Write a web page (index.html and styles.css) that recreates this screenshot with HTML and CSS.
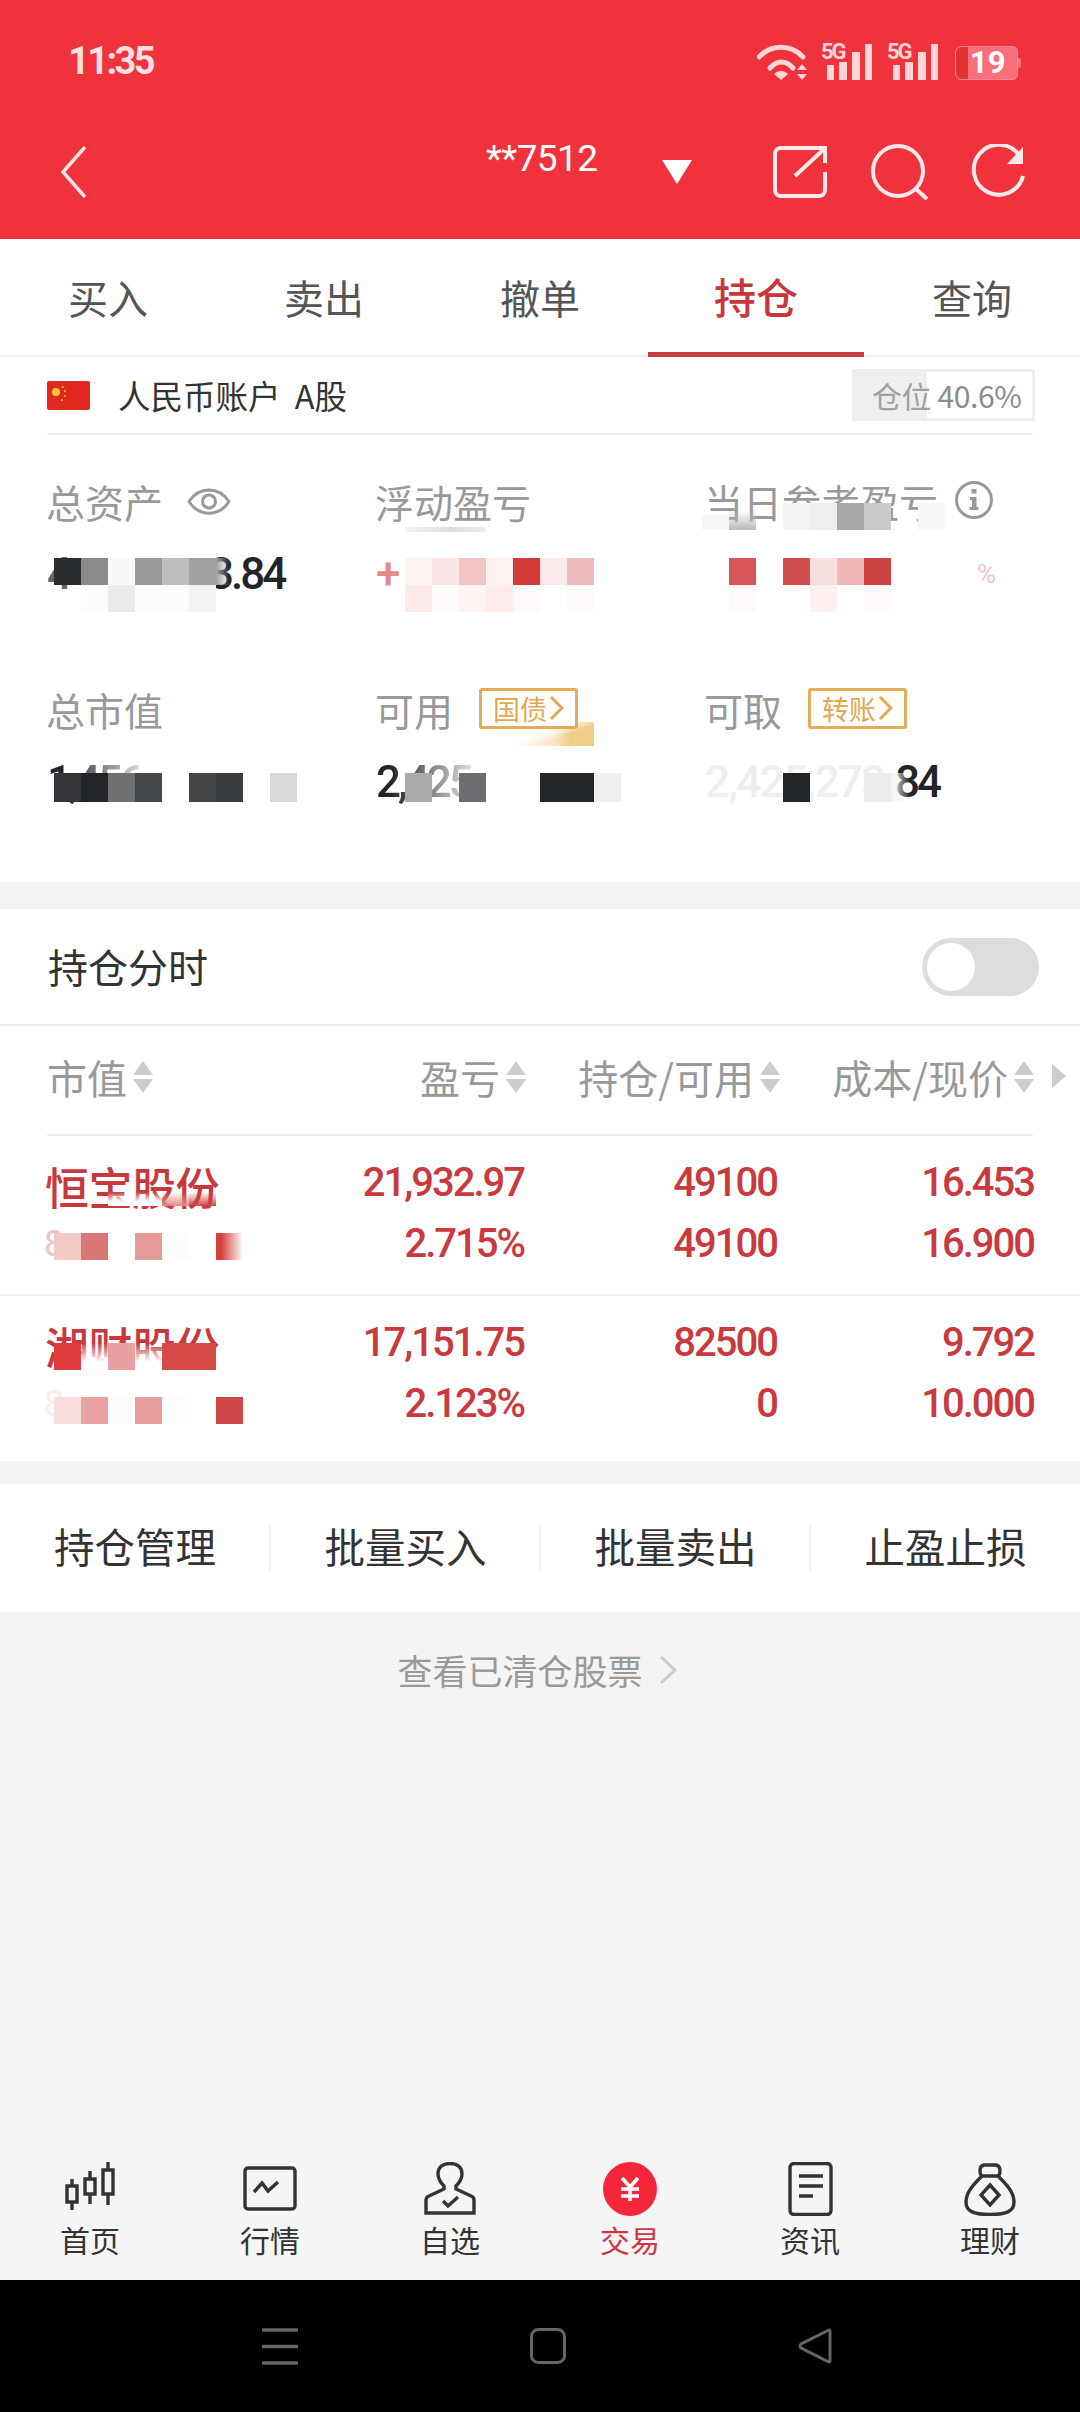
FILE: index.html
```html
<!DOCTYPE html>
<html lang="zh-CN">
<head>
<meta charset="utf-8">
<title>持仓</title>
<link rel="stylesheet" href="styles.css">
</head>
<body>
<div class="page">
  <header class="appbar">
    <div class="status">
      <span class="time">11:35</span>
      <div class="status-icons">
        <svg class="ic-wifi" viewBox="0 0 50 37"><path class="wifi-arc" d="M2 14C14 1 34 1 46 14"/><path class="wifi-arc" d="M13 25C20 17 29 17 36 25"/><path class="wifi-fill" d="M24 37L17 31C21 27 27 27 31 31Z"/><path class="wifi-fill" d="M45 21L50 27H40ZM45 37L40 31H50Z"/></svg>
        <div class="signal"><span class="five-g">5G</span><svg class="ic-signal" viewBox="0 0 52 37"><path class="bars" d="M6 22H13V37H6ZM18 19H26V37H18ZM31 9H39V37H31ZM44 1H51V37H44Z"/></svg></div>
        <div class="signal"><span class="five-g">5G</span><svg class="ic-signal" viewBox="0 0 52 37"><path class="bars" d="M6 22H13V37H6ZM18 19H26V37H18ZM31 9H39V37H31ZM44 1H51V37H44Z"/></svg></div>
        <div class="battery"><span class="batt-low"></span><span class="batt-num">19</span></div>
      </div>
    </div>
    <div class="navrow">
      <svg class="ic-back" viewBox="0 0 27 52"><path d="M25 1L3 26L25 51"/></svg>
      <span class="account">**7512</span>
      <svg class="ic-tri" viewBox="0 0 30 24"><path d="M0 0H30L15 24Z"/></svg>
      <svg class="ic-share" viewBox="0 0 54 52"><path d="M52 17V2H8A6 6 0 0 0 2 8V44A6 6 0 0 0 8 50H46A6 6 0 0 0 52 44V26M22 30L51 3"/></svg>
      <svg class="ic-search" viewBox="0 0 58 56"><circle cx="27" cy="27" r="25"/><path d="M45 45L56 55"/></svg>
      <svg class="ic-refresh" viewBox="0 0 58 56"><path d="M50 11A25 25 0 1 0 54 32"/><path class="fillw" d="M54 3V20H38Z"/></svg>
    </div>
  </header>

  <nav class="tabs">
    <span class="tab">买入</span>
    <span class="tab">卖出</span>
    <span class="tab">撤单</span>
    <span class="tab tab-on">持仓</span>
    <span class="tab">查询</span>
  </nav>

  <section class="acct">
    <svg class="flag" viewBox="0 0 43 29"><rect width="43" height="29" rx="2" fill="#E0281E"/><circle cx="9" cy="11" r="4" fill="#F6C93C"/><circle cx="16" cy="6" r="1" fill="#F6C93C"/><circle cx="18" cy="10" r="1" fill="#F6C93C"/><circle cx="18" cy="15" r="1" fill="#F6C93C"/><circle cx="15" cy="19" r="1" fill="#F6C93C"/></svg>
    <span class="acct-name">人民币账户 A股</span>
    <span class="ratio"><span class="ratio-l">仓位</span> 40.6%</span>
  </section>

  <section class="stats">
    <div class="stat">
      <div class="label">总资产<svg class="ic-eye" viewBox="0 0 44 29"><path d="M2 14.5C12 -1 32 -1 42 14.5C32 30 12 30 2 14.5Z"/><circle cx="22" cy="14.5" r="6.5"/></svg></div>
      <div class="val"><span class="frag">4</span><span class="sp-total"></span>3.84</div>
    </div>
    <div class="stat">
      <div class="label">浮动盈亏</div>
      <div class="val"><span class="plus">+</span></div>
    </div>
    <div class="stat">
      <div class="label">当日参考盈亏<svg class="ic-info" viewBox="0 0 40 40"><circle cx="20" cy="20" r="17.5"/><path class="fillg" d="M17.5 9H22.5V13.5H17.5ZM16 17H22.5V27H24.5V30H15.5V27H18V20H16Z"/></svg></div>
      <div class="val"><span class="sp-day"></span><span class="pct">%</span></div>
    </div>
    <div class="stat">
      <div class="label">总市值</div>
      <div class="val"><span class="fade">1,456</span></div>
    </div>
    <div class="stat">
      <div class="label">可用<span class="tag">国债<svg class="ic-tagchev" viewBox="0 0 15 26"><path d="M2 2L13 13L2 24"/></svg></span></div>
      <div class="val"><span class="fade">2,425</span></div>
    </div>
    <div class="stat">
      <div class="label">可取<span class="tag">转账<svg class="ic-tagchev" viewBox="0 0 15 26"><path d="M2 2L13 13L2 24"/></svg></span></div>
      <div class="val"><span class="pale">2,425,273.</span>84</div>
    </div>

    <div class="mosaic m1"><i class="x2a2d30"></i><i class="x8a8a8a"></i><i class="xf8f8f8"></i><i class="x9a9a9a"></i><i class="xbebebe"></i><i class="xa0a0a0"></i><i class="side-gray"></i><i></i><i class="xfcfcfc"></i><i class="xeaeaea"></i><i class="xfcfcfc"></i><i class="xfcfcfc"></i><i class="xf2f4f3"></i><i></i></div>
    <div class="smudge"></div>
    <div class="mosaic m2"><i class="xfdf3f3"></i><i class="xfae3e3"></i><i class="xf2c4c2"></i><i class="xfdf3f3"></i><i class="xd43a38"></i><i class="xf9e9e9"></i><i class="xeebcbc"></i><i class="xfce9e9"></i><i class="xfffafa"></i><i class="xfff3f3"></i><i class="xfeecec"></i><i class="xfffafa"></i><i></i><i class="xfffafa"></i></div>
    <div class="mosaic m3"><i class="drop-soft"></i><i class="drop-gray"></i><i></i><i class="xf4f4f4"></i><i class="xeeeeee"></i><i class="xa8a8a8"></i><i class="xcacaca"></i><i></i><i class="xf7f7f7"></i></div>
    <div class="mosaic m3b"><i></i><i class="xd85657"></i><i></i><i class="xd34f4e"></i><i class="xf8e0e0"></i><i class="xf0b8b8"></i><i class="xcd4240"></i><i></i><i></i><i></i><i class="xfffafa"></i><i></i><i></i><i class="xfdf0f0"></i><i></i><i class="xfffafa"></i><i></i><i></i></div>
    <div class="mosaic tall m4"><i class="x333538"></i><i class="x222528"></i><i class="x6e7072"></i><i class="x45484a"></i><i></i><i class="x424446"></i><i class="x3b3e40"></i><i></i><i class="xd8d9da"></i></div>
    <div class="mosaic tall m5"><i class="xaaaaaa"></i><i></i><i class="x6c6d70"></i><i></i><i></i><i class="x222528"></i><i class="x222528"></i><i class="xeef0ef"></i></div>
    <div class="mosaic tall m6"><i class="x222528"></i><i></i><i></i><i class="xededed"></i><i class="side-pale"></i></div>
    <div class="gold"></div>
  </section>

  <div class="band"></div>

  <section class="toggle-row">
    <span class="toggle-label">持仓分时</span>
    <span class="toggle"><span class="knob"></span></span>
  </section>

  <section class="thead">
    <span class="th th-left">市值<svg class="ic-sort" viewBox="0 0 20 32"><path d="M10 0L20 14H0ZM0 18H20L10 32Z"/></svg></span>
    <span class="th">盈亏<svg class="ic-sort" viewBox="0 0 20 32"><path d="M10 0L20 14H0ZM0 18H20L10 32Z"/></svg></span>
    <span class="th">持仓/可用<svg class="ic-sort" viewBox="0 0 20 32"><path d="M10 0L20 14H0ZM0 18H20L10 32Z"/></svg></span>
    <span class="th">成本/现价<svg class="ic-sort" viewBox="0 0 20 32"><path d="M10 0L20 14H0ZM0 18H20L10 32Z"/></svg></span>
    <svg class="ic-more" viewBox="0 0 14 24"><path d="M0 0L14 12L0 24Z"/></svg>
  </section>

  <section class="tbody">
    <div class="trow trow-first">
      <span class="name">恒宝股份</span><span class="num">21,932.97</span><span class="num">49100</span><span class="num">16.453</span>
      <span class="sub">8</span><span class="num">2.715%</span><span class="num">49100</span><span class="num">16.900</span>
    </div>
    <div class="trow">
      <span class="name">湘财股份</span><span class="num">17,151.75</span><span class="num">82500</span><span class="num">9.792</span>
      <span class="sub sub-pale">8</span><span class="num">2.123%</span><span class="num">0</span><span class="num">10.000</span>
    </div>
    <div class="mosaic short n1"><i class="drop-white"></i><i class="drop-white"></i><i class="drop-r1"></i><i class="drop-r2"></i></div>
    <div class="mosaic n2"><i class="xf3c9c8"></i><i class="xd97777"></i><i></i><i class="xe59a98"></i><i class="xfefbfb"></i><i></i><i class="side-red"></i></div>
    <div class="mosaic n3"><i class="xdc3c3c"></i><i class="drop-white"></i><i class="xe8a0a0"></i><i class="drop-white"></i><i class="xd74a48"></i><i class="xd74a48"></i></div>
    <div class="mosaic n4"><i class="xf8dfdd"></i><i class="xe9a3a2"></i><i class="xfefbfb"></i><i class="xe69d9c"></i><i class="xfefcfc"></i><i></i><i class="xcf4746"></i></div>
  </section>

  <div class="band band-2"></div>

  <section class="actions">
    <span class="action">持仓管理</span>
    <span class="action">批量买入</span>
    <span class="action">批量卖出</span>
    <span class="action">止盈止损</span>
  </section>

  <main class="rest">
    <div class="cleared">查看已清仓股票<svg class="ic-clear" viewBox="0 0 18 30"><path d="M2 2L16 15L2 28"/></svg></div>
  </main>

  <nav class="bottom">
    <div class="item">
      <svg class="nav-ic" viewBox="0 0 60 54"><path d="M12 17V24M12 40V48M7 24H17V40H7ZM30 9V17M30 32V42M25 17H35V32H25ZM48 0V8M48 32V43M43 8H53V32H43Z"/></svg>
      <span class="item-t">首页</span>
    </div>
    <div class="item">
      <svg class="nav-ic" viewBox="0 0 60 54"><rect x="5" y="6" width="50" height="41" rx="3"/><path d="M14 30L22 21L28 29L38 20"/></svg>
      <span class="item-t">行情</span>
    </div>
    <div class="item">
      <svg class="nav-ic" viewBox="0 0 60 54"><path d="M6 51V38Q6 35 9 34L24 27V24C20 20 18 16 18 12C18 5 23 1.500 30 1.500C37 1.500 42 5 42 12C42 16 40 20 36 24V27L51 34Q54 35 54 38V51Z"/><path d="M23 39L28 44L38 35"/></svg>
      <span class="item-t">自选</span>
    </div>
    <div class="item item-on">
      <svg class="nav-ic" viewBox="0 0 60 54"><circle class="coin" cx="30" cy="27" r="27"/><path class="yen" d="M22 16L30 25L38 16M21 27H39M21 34H39M30 25V39"/></svg>
      <span class="item-t">交易</span>
    </div>
    <div class="item">
      <svg class="nav-ic" viewBox="0 0 60 54"><rect x="10" y="1.500" width="41" height="51" rx="4"/><path d="M19 14H43M19 24H43M19 34H33"/></svg>
      <span class="item-t">资讯</span>
    </div>
    <div class="item">
      <svg class="nav-ic" viewBox="0 0 60 54"><path d="M22 15C19 11 19 4 24 3H36C41 4 41 11 38 15"/><path d="M22 14H38C46 22 54 30 54 40C54 49 47 52.500 30 52.500C13 52.500 6 49 6 40C6 30 14 22 22 14Z"/><path d="M30 23L39 33L30 43L21 33Z"/></svg>
      <span class="item-t">理财</span>
    </div>
  </nav>

  <footer class="sysbar">
    <svg class="sys-menu" viewBox="0 0 36 37"><path d="M0 2H36M0 18.500H36M0 35H36"/></svg>
    <svg class="sys-home" viewBox="0 0 36 36"><rect x="1.500" y="1.500" width="33" height="33" rx="7"/></svg>
    <svg class="sys-back" viewBox="0 0 34 36"><path d="M31 2L3 16Q1 18 3 20L31 34Q32 34 32 32V4Q32 2 31 2Z"/></svg>
  </footer>
</div>
</body>
</html>
```

FILE: styles.css
```css
* { box-sizing: border-box; }
html, body { margin: 0; padding: 0; }
body { width: 1080px; height: 2412px; overflow: hidden; background: #f5f5f5;
  font-family: "Noto Sans CJK SC", "Noto Sans", sans-serif; color: #333; }
svg { display: block; flex: none; }
.page { width: 1080px; height: 2412px; display: flex; flex-direction: column; }

/* app bar */
.appbar { height: 239px; background: #ef323c; display: flex; flex-direction: column; flex: none; }
.status { height: 95px; padding: 43px 62px 0 68px; display: flex; justify-content: space-between; align-items: flex-start; }
.time { font: 700 38px/36px Roboto, sans-serif; letter-spacing: -2.6px; color: #ffdfe0; }
.status-icons { display: flex; align-items: flex-start; gap: 14px; }
.ic-wifi { width: 50px; height: 37px; }
.wifi-arc { fill: none; stroke: #ffd5d8; stroke-width: 5; stroke-linecap: round; }
.wifi-fill { fill: #ffd5d8; }
.signal { position: relative; width: 52px; height: 37px; }
.ic-signal { width: 52px; height: 37px; }
.five-g { position: absolute; left: 0; top: -1px; font: 700 22px/20px Roboto, sans-serif; color: #ffd5d8; letter-spacing: -2px; white-space: nowrap; }
.bars { fill: #ffd5d8; }
.battery { position: relative; width: 63px; height: 34px; margin: 3px 0 0 2px; border-radius: 7px 5px 5px 7px;
  background: #f66f7b; border: 1px solid #f9858e; display: flex; align-items: center; }
.battery::after { content: ""; position: absolute; right: -4px; top: 11px; width: 3px; height: 10px; background: #f66f7b; border-radius: 0 2px 2px 0; }
.batt-low { width: 12px; height: 32px; background: #e23330; border-radius: 6px 0 0 6px; flex: none; }
.batt-num { font: 700 31px/32px Roboto, sans-serif; color: #fff; margin-left: 2px; }

.navrow { height: 144px; padding: 10px 0 0 60px; display: flex; align-items: center; }
.ic-back { width: 27px; height: 52px; fill: none; stroke: #ffe5e6; stroke-width: 3.5; margin-right: 399px; }
.account { width: 176px; font: 400 37px/36px Roboto, sans-serif; color: #fff; margin-bottom: 26px; flex: none; letter-spacing: -.6px; }
.ic-tri { width: 30px; height: 24px; fill: #fff; margin-right: 81px; }
.ic-share { width: 54px; height: 52px; fill: none; stroke: #ffe8e9; stroke-width: 4; margin-right: 44px; }
.ic-search { width: 58px; height: 56px; fill: none; stroke: #ffe8e9; stroke-width: 4; margin-right: 40px; }
.ic-refresh { width: 58px; height: 56px; fill: none; stroke: #ffe8e9; stroke-width: 4; }
.ic-refresh .fillw { fill: #ffe8e9; stroke: none; }

/* tabs */
.tabs { height: 118px; display: grid; grid-template-columns: repeat(5, 216px); background: #fff; border-bottom: 2px solid #eee; flex: none; }
.tab { display: flex; align-items: center; justify-content: center; font-size: 40px; line-height: 1; color: #555; padding-bottom: 3px; }
.tab-on { color: #c8363c; font-size: 42px; font-weight: 500; border-bottom: 5px solid #c63c40; height: 118px; padding-bottom: 0; }

/* account row */
.acct { height: 78px; margin: 0; padding: 0 47px; display: flex; align-items: center; background: #fff; position: relative; flex: none; }
.acct::after { content: ""; position: absolute; left: 47px; right: 47px; bottom: 0; height: 2px; background: #eee; }
.flag { width: 43px; height: 29px; margin-right: 28px; margin-top: -2px; }
.acct-name { font-size: 32.500px; line-height: 1; color: #333; margin-top: -2px; word-spacing: 7px; }
.ratio { margin-left: auto; margin-right: -2px; margin-top: -2px; width: 183px; height: 52px; border: 3px solid #eee;
  background: linear-gradient(90deg, #eee 40.6%, #fff 40.6%); font: 400 30px/46px "Noto Sans CJK SC", sans-serif; color: #8c8c8c; padding-left: 17px; white-space: nowrap; letter-spacing: -.4px; }
.ratio-l { color: #a0a0a0; }

/* stats */
.stats { position: relative; height: 447px; padding: 46px 0 0 47px; background: #fff; display: grid;
  grid-template-columns: 329px 329px 330px; grid-auto-rows: 208px; flex: none; }
.stat { min-width: 0; }
.label { height: 40px; display: flex; align-items: center; font-size: 39px; line-height: 40px; color: #999; white-space: nowrap; margin-left: -1px; }
.val { margin-top: 31px; height: 44px; font: 500 44px/44px Roboto, sans-serif; letter-spacing: -3px; color: #222528; display: flex; white-space: nowrap; }
.ic-eye { width: 44px; height: 29px; margin-left: 24px; fill: none; stroke: #999; stroke-width: 3; }
.ic-info { width: 40px; height: 40px; margin-left: 16px; margin-top: -2px; fill: none; stroke: #999; stroke-width: 3; }
.ic-info .fillg { fill: #999; stroke: none; }
.frag { color: #666; }
.sp-total { width: 140px; flex: none; }
.plus { color: #e48a8a; }
.sp-day { width: 272px; flex: none; }
.pct { color: #f2c6c6; font-size: 26px; font-weight: 400; letter-spacing: 0; }
.fade { -webkit-mask-image: linear-gradient(90deg, #000 15%, rgba(0,0,0,.15) 100%); mask-image: linear-gradient(90deg, #000 15%, rgba(0,0,0,.15) 100%); }
.pale { color: #efefef; letter-spacing: -1.7px; }
.tag { position: relative; z-index: 2; display: inline-flex; align-items: center; width: 99px; height: 41px; margin-left: 26px; margin-top: -2px;
  border: 3px solid #e5ac55; border-radius: 3px; background: #fff; font-size: 27px; line-height: 1; color: #e2a84e; padding-left: 11px; gap: 2px; }
.ic-tagchev { width: 15px; height: 26px; fill: none; stroke: #e2a84e; stroke-width: 3; }

/* pixelated privacy overlay */
.mosaic { position: absolute; display: grid; grid-template-columns: repeat(var(--cols, 9), 27px); grid-auto-rows: 27px; pointer-events: none; z-index: 1; }
.mosaic.tall { grid-auto-rows: 29px; }
.mosaic.short { grid-auto-rows: 14px; }
.m1 { --cols: 7; left: 54px; top: 123px; }
.m2 { --cols: 7; left: 405px; top: 123px; }
.m3 { --cols: 9; left: 702px; top: 68px; }
.m3b { --cols: 9; left: 702px; top: 123px; }
.m4 { --cols: 9; left: 54px; top: 338px; }
.m5 { --cols: 8; left: 405px; top: 338px; }
.m6 { --cols: 5; left: 783px; top: 338px; }
.n1 { --cols: 4; left: 108px; top: 56px; }
.n2 { --cols: 7; left: 54px; top: 97px; }
.n3 { --cols: 6; left: 54px; top: 207px; }
.n4 { --cols: 7; left: 54px; top: 261px; }
.smudge { position: absolute; left: 405px; top: 92px; width: 81px; height: 5px; background: linear-gradient(90deg, #f4f4f4, #ddd 60%, #eee); }
.gold { position: absolute; left: 510px; top: 287px; width: 84px; height: 24px;
  background: linear-gradient(160deg, #fff 38%, rgba(255,255,255,0) 62%), linear-gradient(90deg, #fff 0, #f7e4bd 55%, #f0ce88 72%, #f0ce88 100%); }

.x2a2d30 { background: #2a2d30; } .x8a8a8a { background: #8a8a8a; } .xf8f8f8 { background: #f8f8f8; } .x9a9a9a { background: #9a9a9a; }
.xbebebe { background: #bebebe; } .xa0a0a0 { background: #a0a0a0; } .xfcfcfc { background: #fcfcfc; } .xeaeaea { background: #eaeaea; }
.xf2f4f3 { background: #f2f4f3; } .xfdf3f3 { background: #fdf3f3; } .xfae3e3 { background: #fae3e3; } .xf2c4c2 { background: #f2c4c2; }
.xd43a38 { background: #d43a38; } .xf9e9e9 { background: #f9e9e9; } .xeebcbc { background: #eebcbc; } .xfce9e9 { background: #fce9e9; }
.xfffafa { background: #fffafa; } .xfff3f3 { background: #fff3f3; } .xfeecec { background: #feecec; } .xf4f4f4 { background: #f4f4f4; }
.xeeeeee { background: #eee; } .xa8a8a8 { background: #a8a8a8; } .xcacaca { background: #cacaca; } .xf7f7f7 { background: #f7f7f7; }
.xd85657 { background: #d85657; } .xd34f4e { background: #d34f4e; } .xf8e0e0 { background: #f8e0e0; } .xf0b8b8 { background: #f0b8b8; }
.xcd4240 { background: #cd4240; } .xfdf0f0 { background: #fdf0f0; } .x333538 { background: #333538; } .x222528 { background: #222528; }
.x6e7072 { background: #6e7072; } .x45484a { background: #45484a; } .x424446 { background: #424446; } .x3b3e40 { background: #3b3e40; }
.xd8d9da { background: #d8d9da; } .xaaaaaa { background: #aaa; } .x6c6d70 { background: #6c6d70; } .xeef0ef { background: #eef0ef; }
.xededed { background: #ededed; } .xf3c9c8 { background: #f3c9c8; } .xd97777 { background: #d97777; } .xe59a98 { background: #e59a98; }
.xfefbfb { background: #fefbfb; } .xdc3c3c { background: #dc3c3c; } .xe8a0a0 { background: #e8a0a0; } .xd74a48 { background: #d74a48; }
.xf8dfdd { background: #f8dfdd; } .xe9a3a2 { background: #e9a3a2; } .xe69d9c { background: #e69d9c; } .xfefcfc { background: #fefcfc; } .xcf4746 { background: #cf4746; }
.drop-soft { background: linear-gradient(180deg, transparent 40%, #f6f6f6 45%); }
.drop-gray { background: linear-gradient(180deg, transparent 25%, #bbb 100%); }
.drop-white { background: linear-gradient(180deg, transparent, #fff 70%); }
.drop-r1 { background: linear-gradient(180deg, transparent, #e08a88); }
.drop-r2 { background: linear-gradient(180deg, transparent, #cc4444); }
.side-red { background: linear-gradient(90deg, #d44040 20%, #fff 100%); }
.side-gray { background: linear-gradient(90deg, #a0a0a0 0, rgba(160,160,160,0) 50%); }
.side-pale { background: linear-gradient(90deg, #f4f4f4 0, rgba(244,244,244,0) 70%); }

.band { height: 27px; background: #f4f4f4; flex: none; }
.band-2 { height: 23px; }

/* toggle */
.toggle-row { height: 117px; padding: 0 41px 2px 48px; background: #fff; display: flex; align-items: center; justify-content: space-between; border-bottom: 2px solid #eee; flex: none; }
.toggle-label { font-size: 40px; line-height: 1; color: #333; }
.toggle { width: 117px; height: 58px; border-radius: 29px; background: #ddd; padding: 5px; margin-top: 2px; }
.knob { display: block; width: 48px; height: 48px; border-radius: 50%; background: #fff; }

/* table */
.thead { position: relative; height: 110px; margin: 0; padding: 0 46px 0 47px; background: #fff; display: grid;
  grid-template-columns: 253px 226px 254px 254px; align-items: center; flex: none; }
.thead::after { content: ""; position: absolute; left: 47px; right: 47px; bottom: 0; height: 2px; background: #eee; }
.th { display: flex; justify-content: flex-end; align-items: center; font-size: 40px; line-height: 1; color: #999; gap: 6px; white-space: nowrap; margin-top: -8px; }
.th-left { justify-content: flex-start; gap: 6px; }
.ic-sort { width: 20px; height: 32px; fill: #ccc; }
.ic-more { position: absolute; left: 1052px; top: 38px; width: 14px; height: 24px; fill: #ccc; }

.tbody { position: relative; background: #fff; flex: none; }
.trow { display: grid; grid-template-columns: 253px 226px 254px 254px; grid-auto-rows: 61px; padding: 16px 46px 27px 47px; align-items: center; }
.trow-first { padding-bottom: 20px; border-bottom: 2px solid #f2f2f2; }
.name { font-size: 44px; line-height: 1; font-weight: 500; color: #c8383c; margin-left: -2px; margin-top: 7px; white-space: nowrap; letter-spacing: -.5px; }
.sub { font: 400 36px/1 Roboto, sans-serif; color: #f0c4c4; margin-left: -3px; }
.sub-pale { color: #fbeeee; }
.num { font: 500 40px/1 Roboto, sans-serif; color: #c9393d; text-align: right; padding-right: 2px; letter-spacing: -2px; }
.num:nth-child(4n+3) { padding-right: 3px; }
.num:nth-child(4n) { padding-right: 0; }

/* actions */
.actions { height: 128px; background: #fff; display: grid; grid-template-columns: repeat(4, 270px); align-items: center; flex: none; }
.action { height: 46px; font-size: 40.500px; line-height: 42px; color: #333; text-align: center; border-left: 2px solid #f0f0f0; margin-left: -1px; }
.action:first-child { border-left: 0; margin-left: 0; }

.rest { flex: 1; background: #f4f4f4; padding-top: 36px; min-height: 0; }
.cleared { display: flex; justify-content: center; align-items: center; gap: 16px; font-size: 35px; line-height: 44px; color: #999; padding-right: 6px; }
.ic-clear { width: 18px; height: 30px; fill: none; stroke: #ccc; stroke-width: 3; }

/* bottom nav */
.bottom { height: 136px; background: #f5f5f5; display: grid; grid-template-columns: repeat(6, 180px); padding-top: 18px; flex: none; }
.item { display: flex; flex-direction: column; align-items: center; }
.nav-ic { width: 60px; height: 54px; fill: none; stroke: #333; stroke-width: 3.4; }
.item-t { font-size: 30px; line-height: 34px; color: #333; margin-top: 6px; }
.item-on .item-t { color: #cf3643; }
.coin { fill: #f5263a; stroke: none; }
.yen { stroke: #fff; fill: none; stroke-width: 3.6; }

/* system bar */
.sysbar { height: 132px; background: #000; position: relative; flex: none; display: grid; grid-template-columns: 262px 36px 232px 36px 232px 34px; padding-top: 48px; align-items: start; }
.sys-menu { grid-column: 2; width: 36px; height: 37px; fill: none; stroke: #666; stroke-width: 3.6; }
.sys-home { grid-column: 4; width: 36px; height: 36px; fill: none; stroke: #666; stroke-width: 3; }
.sys-back { grid-column: 6; width: 34px; height: 36px; fill: none; stroke: #666; stroke-width: 3; }
```
